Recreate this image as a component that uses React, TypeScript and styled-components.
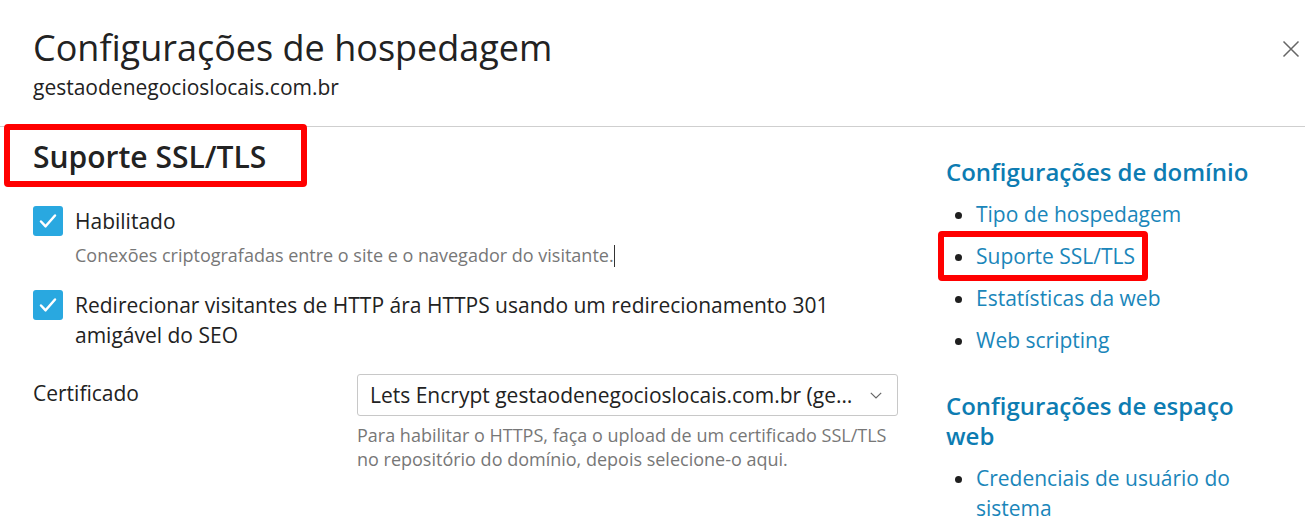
import React from "react";
import styled, { createGlobalStyle } from "styled-components";

const Global = createGlobalStyle`
  html, body { margin: 0; padding: 0; background: #fff; }
  body { font-family: "Open Sans", "DejaVu Sans", sans-serif; color: #222; }
  * { box-sizing: border-box; }
`;

const Dialog = styled.div`
  position: relative;
  width: 1305px;
  height: 522px;
  overflow: hidden;
`;

const Header = styled.header`
  padding: 25px 33px 25px;
  border-bottom: 1px solid #cfcfcf;
`;

const Title = styled.h1`
  margin: 0;
  font-size: 36px;
  font-weight: 400;
  line-height: 46px;
  color: #222;
`;

const Subtitle = styled.div`
  margin-top: 2px;
  font-size: 21px;
  line-height: 28px;
  color: #222;
`;

const Close = styled.button`
  position: absolute;
  top: 39px;
  right: 4px;
  width: 20px;
  height: 20px;
  padding: 0;
  border: 0;
  background: none;
  display: flex;
  align-items: center;
  justify-content: center;
`;

const Body = styled.div`
  display: flex;
  padding: 0 0 0 33px;
`;

const Main = styled.div`
  width: 865px;
  flex: none;
`;

const Side = styled.aside`
  flex: none;
  width: 372px;
  padding: 30px 0 0 48px;
`;

const Frame = styled.span<{ $l: number; $t: number; $w: number; $h: number }>`
  position: absolute;
  left: ${(p) => p.$l}px;
  top: ${(p) => p.$t}px;
  width: ${(p) => p.$w}px;
  height: ${(p) => p.$h}px;
  border: 6px solid #f00;
  border-radius: 4px;
  pointer-events: none;
`;

const SectionTitle = styled.h2`
  position: relative;
  margin: 12px 0 0;
  font-size: 30px;
  font-weight: 600;
  line-height: 36px;
  color: #222;
`;

const Options = styled.div`
  display: flex;
  flex-direction: column;
  gap: 23px;
  margin-top: 31px;
`;

const CheckRow = styled.label`
  display: flex;
  align-items: flex-start;
  gap: 12px;
`;

const Box = styled.span`
  flex: none;
  width: 30px;
  height: 30px;
  border-radius: 3px;
  background: #29a8e0;
  display: flex;
  align-items: center;
  justify-content: center;
`;

const CheckText = styled.div`
  font-size: 21px;
  line-height: 30px;
  color: #222;
`;

const Hint = styled.div`
  font-size: 18px;
  line-height: 24px;
  color: #777;
  margin-top: 7px;
`;

const Caret = styled.span`
  display: inline-block;
  width: 1px;
  height: 22px;
  background: #333;
  vertical-align: -5px;
`;

const Field = styled.div`
  display: flex;
  margin-top: 24px;
`;

const FieldLabel = styled.div`
  width: 324px;
  font-size: 21px;
  line-height: 30px;
  padding-top: 4px;
  color: #222;
`;

const FieldControl = styled.div`
  width: 541px;
`;

const Select = styled.div`
  height: 42px;
  border: 1px solid #c8c8c8;
  border-radius: 3px;
  display: flex;
  align-items: center;
  padding: 0 15px 0 12px;
  gap: 14px;
`;

const SelectValue = styled.span`
  flex: 1;
  min-width: 0;
  font-size: 21px;
  color: #222;
  white-space: nowrap;
  overflow: hidden;
  text-overflow: ellipsis;
`;

const FieldHint = styled.div`
  font-size: 18px;
  line-height: 24px;
  color: #777;
  margin-top: 7px;
`;

const SideTitle = styled.h3`
  margin: 0;
  font-size: 24px;
  font-weight: 600;
  line-height: 30px;
  color: #0d7cb2;
`;

const List = styled.ul<{ $last?: boolean }>`
  margin: 12px 0 ${(p) => (p.$last ? 0 : 36)}px;
  padding: 0 0 0 30px;
`;

const Item = styled.li`
  position: relative;
  font-size: 21px;
  line-height: 30px;
  color: #1f1f1f;
  margin-bottom: 12px;
`;

const Link = styled.a`
  color: #1a86ba;
  text-decoration: none;
  cursor: pointer;
`;

const Check = () => (
  <svg width="22" height="22" viewBox="0 0 22 22" fill="none">
    <path d="M4 11.5l4.6 4.8L18 5.5" stroke="#fff" strokeWidth="2.5" strokeLinecap="round" strokeLinejoin="round" />
  </svg>
);

export default function App() {
  return (
    <Dialog>
      <Global />
      <Header>
        <Title>Configurações de hospedagem</Title>
        <Subtitle>gestaodenegocioslocais.com.br</Subtitle>
      </Header>
      <Close aria-label="Fechar">
        <svg width="18" height="18" viewBox="0 0 18 18">
          <path d="M1.5 1.5l15 15M16.5 1.5l-15 15" stroke="#666" strokeWidth="1.5" />
        </svg>
      </Close>
      <Body>
        <Main>
          <SectionTitle>
            Suporte SSL/TLS
            <Frame $l={-29} $t={-15} $w={303} $h={63} />
          </SectionTitle>
          <Options>
            <CheckRow>
              <Box><Check /></Box>
              <div>
                <CheckText>Habilitado</CheckText>
                <Hint>
                  Conexões criptografadas entre o site e o navegador do visitante.<Caret />
                </Hint>
              </div>
            </CheckRow>
            <CheckRow>
              <Box><Check /></Box>
              <CheckText>
                Redirecionar visitantes de HTTP ára HTTPS usando um redirecionamento 301
                <br />
                amigável do SEO
              </CheckText>
            </CheckRow>
          </Options>
          <Field>
            <FieldLabel>Certificado</FieldLabel>
            <FieldControl>
              <Select>
                <SelectValue>Lets Encrypt gestaodenegocioslocais.com.br (gestaodenegocioslocais.com.br)</SelectValue>
                <svg width="12" height="7" viewBox="0 0 12 7">
                  <path d="M0.8 0.8L6 6l5.2-5.2" stroke="#666" strokeWidth="1.2" fill="none" />
                </svg>
              </Select>
              <FieldHint>
                Para habilitar o HTTPS, faça o upload de um certificado SSL/TLS no repositório do domínio, depois selecione-o aqui.
              </FieldHint>
            </FieldControl>
          </Field>
        </Main>
        <Side>
          <SideTitle>Configurações de domínio</SideTitle>
          <List>
            <Item><Link>Tipo de hospedagem</Link></Item>
            <Item>
              <Link>Suporte SSL/TLS</Link>
              <Frame $l={-38} $t={-10} $w={210} $h={50} />
            </Item>
            <Item><Link>Estatísticas da web</Link></Item>
            <Item><Link>Web scripting</Link></Item>
          </List>
          <SideTitle>Configurações de espaço web</SideTitle>
          <List $last>
            <Item><Link>Credenciais de usuário do sistema</Link></Item>
          </List>
        </Side>
      </Body>
    </Dialog>
  );
}
